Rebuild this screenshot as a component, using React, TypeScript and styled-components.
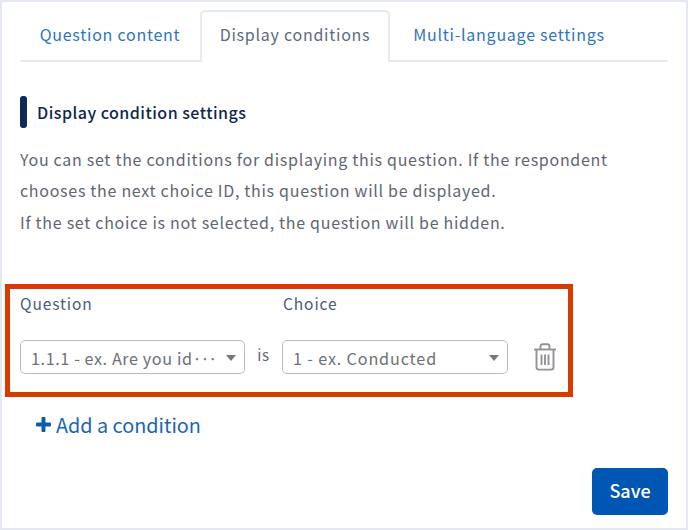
import React from "react";
import styled, { createGlobalStyle } from "styled-components";

const Global = createGlobalStyle`
  html, body { margin: 0; padding: 0; background: #fff; }
  * { box-sizing: border-box; }
`;

const FONT = `"Noto Sans CJK JP", "Noto Sans", sans-serif`;

const Frame = styled.div`
  width: 688px;
  height: 530px;
  border: 2px solid #e3e8f1;
  padding: 8px 18px 0 18px;
  background: #fff;
  font-family: ${FONT};
  display: flex;
  flex-direction: column;
  overflow: hidden;
`;

const Tabs = styled.div`
  display: flex;
  height: 52px;
  border-bottom: 2px solid #e6eaf1;
`;

const Tab = styled.div<{ $active?: boolean; $width: number }>`
  width: ${(p) => p.$width}px;
  height: ${(p) => (p.$active ? "52px" : "50px")};
  display: flex;
  align-items: center;
  justify-content: center;
  padding-bottom: ${(p) => (p.$active ? "6px" : "2px")};
  font-size: 16px;
  letter-spacing: 0.75px;
  color: ${(p) => (p.$active ? "#5c6a80" : "#2f74bd")};
  background: #fff;
  ${(p) =>
    p.$active
      ? `border: 2px solid #e6eaf1; border-bottom: none; border-radius: 5px 5px 0 0;`
      : ""}
`;

const Heading = styled.h2`
  margin: 34px 0 0;
  display: flex;
  align-items: center;
  gap: 10px;
  height: 32px;
  font-size: 16px;
  font-weight: 500;
  color: #10264f;
  letter-spacing: 0.48px;
`;

const HeadingBar = styled.span`
  width: 7px;
  height: 32px;
  border-radius: 3px;
  background: #0b2a5b;
`;

const Description = styled.p`
  margin: 15.7px 0 0;
  font-size: 16px;
  line-height: 31.5px;
  letter-spacing: 0.71px;
  color: #5f6672;
`;

const Outline = styled.div`
  margin: 45.8px 0 0 -15px;
  width: 568px;
  height: 113px;
  border: 5px solid #d93a00;
  padding: 2px 0 0 10px;
`;

const Labels = styled.div`
  display: flex;
  height: 24px;
`;

const Label = styled.span<{ $width: number }>`
  width: ${(p) => p.$width}px;
  font-size: 15.5px;
  line-height: 24px;
  letter-spacing: 0.9px;
  color: #4a5c78;
`;

const Row = styled.div`
  margin-top: 25.5px;
  display: flex;
  align-items: center;
`;

const Select = styled.div<{ $width: number; $tracking: number }>`
  width: ${(p) => p.$width}px;
  height: 34px;
  border: 1.5px solid #b9bcc1;
  border-radius: 5px;
  display: flex;
  align-items: center;
  justify-content: space-between;
  padding: 2px 8px 0 10px;
  font-size: 16.2px;
  letter-spacing: ${(p) => p.$tracking}px;
  color: #6d7178;
  white-space: nowrap;
`;

const Dots = styled.span`
  letter-spacing: -1.2px;
`;

const Caret = styled.span`
  width: 0;
  height: 0;
  border-left: 5px solid transparent;
  border-right: 5px solid transparent;
  border-top: 6px solid #77797d;
`;

const IsText = styled.span`
  width: 37px;
  text-align: center;
  font-size: 15px;
  letter-spacing: 0.6px;
  color: #5f6672;
  padding-bottom: 5px;
`;

const TrashButton = styled.span`
  margin-left: 25px;
  display: flex;
  color: #8f9296;
`;

const AddLink = styled.div`
  margin: 12.5px 0 0 16px;
  display: flex;
  align-items: center;
  gap: 5px;
  height: 30px;
  font-size: 19.8px;
  color: #1b65b5;
`;

const Footer = styled.div`
  margin-top: 28.2px;
  display: flex;
  justify-content: flex-end;
`;

const SaveButton = styled.button`
  width: 76px;
  height: 47px;
  border: none;
  border-radius: 5px;
  background: #0056b3;
  color: #fff;
  font-family: ${FONT};
  font-size: 18px;
  font-weight: 500;
  padding: 0 0 2px;
`;

const TrashIcon = () => (
  <svg width="24" height="28" viewBox="0 0 24 28" fill="none" stroke="currentColor" strokeWidth="1.9">
    <path d="M1 6.5h22" />
    <path d="M7.5 6V3.2C7.5 2 8.3 1.2 9.5 1.2h5c1.2 0 2 .8 2 2V6" />
    <path d="M3.5 7v17c0 1.5 1 2.6 2.5 2.6h12c1.5 0 2.5-1.1 2.5-2.6V7" />
    <path d="M8.5 11.5v10.5M12 11.5v10.5M15.5 11.5v10.5" />
  </svg>
);

const PlusIcon = () => (
  <svg width="15" height="15" viewBox="0 0 15 15" fill="#0f5bad">
    <rect x="0" y="5.5" width="15" height="4" rx="1" />
    <rect x="5.5" y="0" width="4" height="15" rx="1" />
  </svg>
);

export default function App() {
  return (
    <>
      <Global />
      <Frame>
        <Tabs>
          <Tab $width={180}>Question content</Tab>
          <Tab $width={190} $active>Display conditions</Tab>
          <Tab $width={238}>Multi-language settings</Tab>
        </Tabs>
        <Heading>
          <HeadingBar />
          Display condition settings
        </Heading>
        <Description>
          You can set the conditions for displaying this question. If the respondent
          <br />
          chooses the next choice ID, this question will be displayed.
          <br />
          If the set choice is not selected, the question will be hidden.
        </Description>
        <Outline>
          <Labels>
            <Label $width={263}>Question</Label>
            <Label $width={100}>Choice</Label>
          </Labels>
          <Row>
            <Select $width={225} $tracking={0.6}>
              <span>
                1.1.1 - ex. Are you id<Dots>···</Dots>
              </span>
              <Caret />
            </Select>
            <IsText>is</IsText>
            <Select $width={226} $tracking={0.85}>
              <span>1 - ex. Conducted</span>
              <Caret />
            </Select>
            <TrashButton>
              <TrashIcon />
            </TrashButton>
          </Row>
        </Outline>
        <AddLink>
          <PlusIcon />
          Add a condition
        </AddLink>
        <Footer>
          <SaveButton>Save</SaveButton>
        </Footer>
      </Frame>
    </>
  );
}
